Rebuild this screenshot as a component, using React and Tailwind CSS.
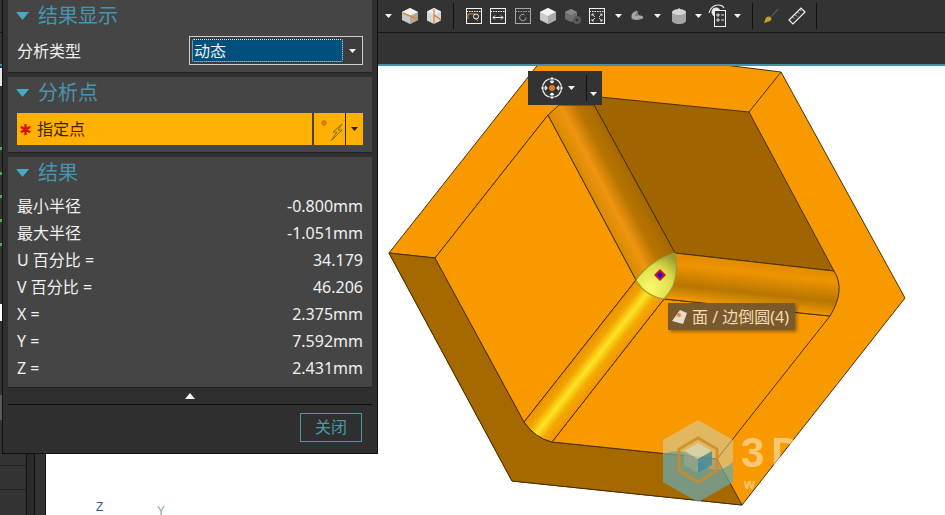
import React from 'react';

// ── Small toolbar glyphs ──────────────────────────────────────────
const Caret = ({ className = '', color = '#f2f2f2' }) => (
  <svg width="7" height="4" viewBox="0 0 7 4" className={className}><path d="M0 0h7L3.500 4z" fill={color} /></svg>
);

const Sep = () => <div className="w-px h-[26px] bg-[#111]" />;

const IsoCube = ({ line }) => (
  <svg width="18" height="18" viewBox="0 0 18 18">
    <path d="M9 1l8 4v8l-8 4-8-4V5z" fill="#c9c9c9" />
    <path d="M9 1l8 4-8 4-8-4z" fill="#f2f2f2" />
    <path d="M9 9l8-4v8l-8 4z" fill="#a9a9a9" />
    {line && <path d="M2 6l14 6" stroke="#d98a3a" strokeWidth="1.400" />}
  </svg>
);

const HalfCube = () => (
  <svg width="16" height="18" viewBox="0 0 16 18">
    <path d="M8 1l7 3.500v9L8 17l-7-3.500v-9z" fill="#d8d8d8" />
    <path d="M8 1l7 3.500-7 3.500-7-3.500z" fill="#f0ece6" />
    <path d="M8 2v15M8 8l7 5" stroke="#d07a3a" strokeWidth="1.100" fill="none" />
  </svg>
);

const Win = ({ children, dim }) => (
  <svg width="16" height="16" viewBox="0 0 16 16" fill="none" stroke={dim ? '#a8a8a8' : '#f4f4f4'} strokeWidth="1">
    <rect x=".5" y=".5" width="15" height="15" />
    <path d="M.5 3.500h15" strokeDasharray="1.500 1" />
    {children}
  </svg>
);

const GrayCube = () => (
  <svg width="18" height="18" viewBox="0 0 18 18">
    <path d="M7 2l6 3v7l-6 3-6-3V5z" fill="#6f6f6f" />
    <path d="M7 2l6 3-6 3-6-3z" fill="#8a8a8a" />
    <circle cx="13" cy="13" r="4" fill="#5c5c5c" />
    <circle cx="13" cy="13" r="1.500" fill="#333" />
  </svg>
);

const Lens = () => (
  <svg width="18" height="16" viewBox="0 0 18 16">
    <path d="M2 10C1 6 5 2 9 1l2 6c3 0 6 1 6 3-4 2-11 3-15 0z" fill="#a8a8a8" />
    <path d="M9 1l2 6-5 2z" fill="#7d7d7d" />
    <path d="M2 11c4 2 11 2 15-1" stroke="#d0d0d0" fill="none" />
  </svg>
);

const Cylinder = () => (
  <svg width="16" height="16" viewBox="0 0 16 16">
    <path d="M1 4v9c0 1.500 3 3 7 3s7-1.500 7-3V4z" fill="#a6a6a6" />
    <ellipse cx="8" cy="4" rx="7" ry="3" fill="#d6d6d6" />
    <path d="M8 0v2" stroke="#eee" />
  </svg>
);

const EyeList = () => (
  <svg width="18" height="24" viewBox="0 0 18 24" fill="none">
    <path d="M1 9c1-5 5-8 9-8 3 0 5 1 6 3" stroke="#efefef" strokeWidth="1.200" />
    <circle cx="8" cy="8" r="4.500" fill="#e8e8e8" />
    <rect x="6.500" y="6.500" width="11" height="16" fill="#333" stroke="#f2f2f2" />
    <path d="M9 10h2v2H9zM13 11h3M9 15h2v2H9zM13 16h3" stroke="#f2f2f2" strokeWidth=".9" />
  </svg>
);

const Brush = () => (
  <svg width="16" height="16" viewBox="0 0 16 16" fill="none">
    <path d="M15 1L7 10" stroke="#6e6e6e" strokeWidth="1" />
    <path d="M7 9c2 1 2 3 0 4-1 1-4 1-6 2 1-2 1-5 3-6 1-.6 2-.6 3 0z" fill="#c7a02c" />
  </svg>
);

const Ruler = () => (
  <svg width="18" height="18" viewBox="0 0 18 18" fill="none" stroke="#f2f2f2" strokeWidth="1.200">
    <path d="M1 13L13 1l4 4L5 17z" />
    <path d="M4.500 10l1.500 1.500M7 7.500L9 9.500M9.500 5L11 6.500M12 2.500L13.500 4" strokeWidth=".9" />
  </svg>
);

// slot widths follow the spacing of the strip in the picture
const TOOLS = [
  { w: 'w-[20px]', el: <Caret /> },
  { w: 'w-[24px]', el: <IsoCube line /> },
  { w: 'w-[24px]', el: <HalfCube /> },
  { w: 'w-[14px]', el: <Sep /> },
  { w: 'w-[28px]', el: <Win><path d="M2 11V6h7M12 13l-3-3" stroke="#d98a3a" /><circle cx="10" cy="8.500" r="2.500" /></Win> },
  { w: 'w-[20px]', el: <Win><path d="M3 9.500h10M5 7.500l-2 2 2 2M11 7.500l2 2-2 2" /></Win> },
  { w: 'w-[30px]', el: <Win dim><path d="M11 9.500a3.200 3.200 0 1 1-1.500-2.700" /></Win> },
  { w: 'w-[20px]', el: <IsoCube /> },
  { w: 'w-[30px]', el: <GrayCube /> },
  { w: 'w-[18px]', el: <Win><path d="M3 6l3 3M3 6h2M3 6v2M13 13l-3-3M13 13h-2M13 13v-2M13 6l-3 3M13 6h-2M13 6v2M3 13l3-3M3 13h2M3 13v-2" strokeWidth=".8" /></Win> },
  { w: 'w-[24px]', el: <Caret /> },
  { w: 'w-[14px]', el: <Lens /> },
  { w: 'w-[26px]', el: <Caret /> },
  { w: 'w-[18px]', el: <Cylinder /> },
  { w: 'w-[20px]', el: <Caret /> },
  { w: 'w-[18px]', el: <EyeList /> },
  { w: 'w-[22px]', el: <Caret /> },
  { w: 'w-[8px]', el: <Sep /> },
  { w: 'w-[30px]', el: <Brush /> },
  { w: 'w-[22px]', el: <Ruler /> },
  { w: 'w-[16px]', el: <Sep /> },
];

const RESULTS = [
  ['最小半径', '-0.800mm'],
  ['最大半径', '-1.051mm'],
  ['U 百分比 =', '34.179'],
  ['V 百分比 =', '46.206'],
  ['X =', '2.375mm'],
  ['Y =', '7.592mm'],
  ['Z =', '2.431mm'],
];

// ── Part drawing ──────────────────────────────────────────────────
function Model() {
  const edge = { stroke: '#4a3000', strokeWidth: 1, strokeLinejoin: 'round' };
  return (
    <svg viewBox="46 66 899 449" className="block w-full h-full">
      <defs>
        <linearGradient id="f1" gradientUnits="userSpaceOnUse" x1="590" y1="193" x2="630" y2="172">
          <stop offset="0" stopColor="#d98a00" />
          <stop offset=".32" stopColor="#ef9510" />
          <stop offset=".65" stopColor="#b87400" />
          <stop offset="1" stopColor="#a66900" />
        </linearGradient>
        <linearGradient id="f2" gradientUnits="userSpaceOnUse" x1="580" y1="351" x2="606.500" y2="372">
          <stop offset="0" stopColor="#ee9000" />
          <stop offset=".25" stopColor="#f2a400" />
          <stop offset=".5" stopColor="#ffe424" />
          <stop offset=".75" stopColor="#f2a800" />
          <stop offset="1" stopColor="#f59500" />
        </linearGradient>
        <linearGradient id="f3" gradientUnits="userSpaceOnUse" x1="750" y1="261" x2="745" y2="307">
          <stop offset="0" stopColor="#e08a00" />
          <stop offset=".25" stopColor="#ef9400" />
          <stop offset=".68" stopColor="#b87600" />
          <stop offset=".82" stopColor="#cf8500" />
          <stop offset="1" stopColor="#f59900" />
        </linearGradient>
        <radialGradient id="leaf" gradientUnits="userSpaceOnUse" cx="650" cy="288" r="38">
          <stop offset="0" stopColor="#fbfb6a" />
          <stop offset=".6" stopColor="#dcdc4c" />
          <stop offset="1" stopColor="#9d9a2e" />
        </radialGradient>
      </defs>

      {/* outer hexagon / rim */}
      <path d="M389 253L540 62H700L781 72L905 298L742 505L512 481Z" fill="#f99900" {...edge} />
      <path d="M781 72L749 112M548 115L435 258L389 253" fill="none" {...edge} />

      {/* outer wall, lower left */}
      <path d="M389 253L435 258L524 422Q535 438 552 442L717 459L742 505L512 481Z" fill="#a66900" {...edge} />

      {/* floors */}
      <path d="M548 115L636 280L524 422L435 258Z" fill="#f99900" {...edge} />
      <path d="M664 299L830 316L717 459L552 442Z" fill="#f99900" {...edge} />

      {/* inner wall, upper right */}
      <path d="M749 112L590 96L594 105L675 253L834 271Z" fill="#a06500" {...edge} />

      {/* fillets */}
      <path d="M548 115L559 105L594 105L675 253L636 280Z" fill="url(#f1)" {...edge} />
      <path d="M636 280L524 422Q535 438 552 442L664 299Z" fill="url(#f2)" {...edge} />
      <path d="M675 253L834 271Q846 290 830 316L664 299Z" fill="url(#f3)" {...edge} />

      {/* picked face */}
      <path d="M636 280Q650 260 675 253Q681 282 664 299Q645 296 636 280Z" fill="url(#leaf)" stroke="#9a9a28" strokeWidth="1.200" />
      <path d="M660 269l6 6-6 6-6-6z" fill="#d0102a" />
      <path d="M660 272l3 3-3 3-3-3z" fill="#1010e0" />

      {/* watermark */}
      <path d="M698 420L733 440V482L698 502L663 482V440Z" fill="#c9d8c0" opacity=".5" />
      <path d="M663 482V455Q680 445 698 461Q716 478 733 462V482L698 502Z" fill="#2f8fa8" opacity=".45" />
      <path d="M698 438L717 449V471L698 482L679 471V449Z" fill="none" stroke="#cc8a2a" strokeWidth="3" opacity=".85" />
      <path d="M698 443L712 451L698 459L684 451Z" fill="#d6dcc0" opacity=".7" />
      <path d="M698 459L712 451V465L698 473Z" fill="#3d8ca0" opacity=".8" />
      <path d="M698 459L684 451V465L698 473Z" fill="#94a68c" opacity=".8" />
      <text x="741" y="467" fontFamily="Liberation Sans, sans-serif" fontWeight="700" fontSize="42" letterSpacing="7" fill="#ffffff" opacity=".45">3D</text>
      <text x="744" y="489" fontFamily="Liberation Sans, sans-serif" fontWeight="700" fontSize="14" fill="#ffffff" opacity=".45">w</text>

      {/* triad labels */}
      <text x="96" y="511" fontFamily="Liberation Sans, sans-serif" fontSize="12" fill="#2b5aa8">Z</text>
      <text x="157" y="515" fontFamily="Liberation Sans, sans-serif" fontSize="12" fill="#7fae84">Y</text>
    </svg>
  );
}

// ── Dialog pieces ─────────────────────────────────────────────────
function Header({ title }) {
  return (
    <div className="flex items-center h-[28px] pl-[8px] gap-[9px] translate-y-px">
      <svg width="13" height="8" viewBox="0 0 13 8"><path d="M0 0h13L6.500 8z" fill="#4aa8c8" /></svg>
      <span className="text-[20px] leading-[28px] text-[#4795ad]">{title}</span>
    </div>
  );
}

function Dialog() {
  return (
    <div className="absolute left-[2px] top-0 w-[376px] h-[454px] bg-[#2f2f2f] border-x border-b border-[#111] px-[5px] flex flex-col text-[#f0f0f0]">
      {/* 结果显示 */}
      <div className="h-[73px] bg-[#454545] border-b border-[#222] pt-px">
        <Header title="结果显示" />
        <div className="flex items-center justify-between pl-[9px] pr-[9px] mt-[7px]">
          <span className="text-[16px] leading-[22px]">分析类型</span>
          <div className="w-[174px] h-[29px] border border-[#d0d0d0] bg-[#3c3c3c] flex items-center pl-[2px]">
            <div className="w-[151px] h-[23px] bg-[#004f7c] border border-dotted border-[#d8e8f0] rounded-[2px] text-[16px] leading-[23px] pl-px">动态</div>
            <div className="flex-1 flex justify-center"><Caret /></div>
          </div>
        </div>
      </div>

      {/* 分析点 */}
      <div className="h-[76px] mt-[4px] bg-[#454545] border-b border-[#222] pt-px">
        <Header title="分析点" />
        <div className="flex h-[32px] pl-[9px] pr-[9px] mt-[7px] gap-[2px]">
          <div className="flex-1 bg-[#ffb000] flex items-center pl-[3px] gap-[6px]">
            <svg width="11" height="11" viewBox="0 0 11 11" stroke="#d8120a" strokeWidth="2.400">
              <path d="M5.500 0v11M.8 2.800l9.400 5.400M.8 8.200l9.400-5.400" />
            </svg>
            <span className="text-[16px] text-[#3a2500]">指定点</span>
          </div>
          <div className="w-[49px] bg-[#ffb000] flex items-center">
            <svg width="31" height="26" viewBox="0 0 31 26" fill="none">
              <circle cx="10" cy="7" r="2.400" fill="#e87820" stroke="#c06010" strokeWidth=".5" />
              <path d="M28 8l-9 8h4l-6 9 11-11h-4l4-6z" stroke="#8a6a10" strokeWidth="1" />
            </svg>
            <div className="w-px h-[32px] bg-[#222]" />
            <div className="flex-1 flex justify-center"><Caret color="#2a1c00" /></div>
          </div>
        </div>
      </div>

      {/* 结果 */}
      <div className="h-[231px] mt-[4px] bg-[#454545] border-b border-[#222] pt-px">
        <Header title="结果" />
        <div className="flex flex-col pl-[9px] pr-[9px] mt-[7px]">
          {RESULTS.map(([label, val]) => (
            <div key={label} className="flex justify-between h-[27px] items-center text-[16px] leading-[27px]">
              <span>{label}</span>
              <span>{val}</span>
            </div>
          ))}
        </div>
      </div>

      {/* collapse arrow + footer */}
      <div className="h-[17px] border-b border-[#0c0c0c] flex items-center justify-center">
        <svg width="10" height="6" viewBox="0 0 10 6"><path d="M5 0l5 6H0z" fill="#f4f4f4" /></svg>
      </div>
      <div className="flex justify-end pt-[8px] pr-[10px]">
        <button className="w-[62px] h-[29px] border border-[#4d98a8] text-[16px] leading-[27px] text-[#4d98a8]">关闭</button>
      </div>
    </div>
  );
}

// tree markers that peek out beside the dialog
const TICKS = ['top-[81px]', 'top-[106px]', 'top-[129px]', 'top-[153px]', 'top-[177px]'];

function LeftStrip() {
  return (
    <div className="relative w-[46px] flex bg-[#333]">
      <div className="w-[27px] flex flex-col border-r border-[#111]">
        <div className="h-[329px]" />
        <div className="h-[25px] bg-[#5a5a5a]" />
        <div className="h-[46px] border-b border-[#222]" />
        <div className="h-[24px] border-b border-[#222]" />
        <div className="flex-1" />
      </div>
      <div className="w-[8px] bg-[#2b2b2b] border-r border-[#111]" />
      <div className="flex-1 border-r border-[#111]" />
      {TICKS.map(t => <div key={t} className={`absolute left-0 ${t} w-[2px] h-[3px] bg-[#3fb54a]`} />)}
      <div className="absolute left-0 top-[2px] w-[2px] h-[18px] bg-[#e8e8e8]" />
      <div className="absolute left-0 top-[238px] w-[2px] h-[17px] bg-white" />
    </div>
  );
}

export default function App() {
  return (
    <div className="relative w-[945px] h-[515px] overflow-hidden flex flex-col bg-white font-['Noto_Sans','Noto_Sans_CJK_SC',sans-serif]">
      {/* ribbon strip */}
      <div className="h-[33px] bg-[#333] border-b border-[#181818] flex items-center pl-[378px]">
        {TOOLS.map((t, i) => (
          <div key={i} className={`${t.w} h-[32px] flex items-center justify-center`}>{t.el}</div>
        ))}
      </div>
      <div className="h-[31px] bg-[#333]" />
      <div className="h-[2px] bg-[#4a8ea6]" />

      <div className="flex-1 flex min-h-0">
        <LeftStrip />
        <div className="relative flex-1 bg-white">
          <Model />

          {/* snap point popup */}
          <div className="absolute left-[482px] top-[5px] w-[74px] h-[34px] bg-[#333] flex items-center">
            <svg width="24" height="24" viewBox="0 0 24 24" fill="none" stroke="#f0f0f0" strokeWidth="1.200" className="ml-[12px]">
              <circle cx="12" cy="12" r="9.500" />
              <circle cx="12" cy="12" r="3" fill="#d9782a" stroke="none" />
              <path d="M12 1v6M1 12h6M23 12h-6M12 23v-6M10 5l2 2 2-2M5 10l2 2-2 2M19 10l-2 2 2 2M10 19l2-2 2 2" />
            </svg>
            <Caret className="ml-[4px]" />
            <div className="w-px h-[26px] bg-[#111] ml-[11px]" />
            <Caret className="ml-[3px] mt-[12px]" />
          </div>

          {/* hover tip */}
          <div className="absolute left-[622px] top-[237px] w-[127px] h-[27px] bg-[#7a5a2c] shadow-[2px_2px_3px_rgba(0,0,0,0.35)] flex items-center pl-[3px] gap-[5px] text-[16px] text-[#f3dcb6] whitespace-nowrap">
            <svg width="16" height="16" viewBox="0 0 16 16">
              <path d="M9 1l7 3-4 11-11-3z" fill="#e8dccb" />
              <circle cx="8" cy="6" r="2" fill="#e08a3a" />
            </svg>
            <span>面 / 边倒圆(4)</span>
          </div>
        </div>
      </div>

      <Dialog />
    </div>
  );
}
